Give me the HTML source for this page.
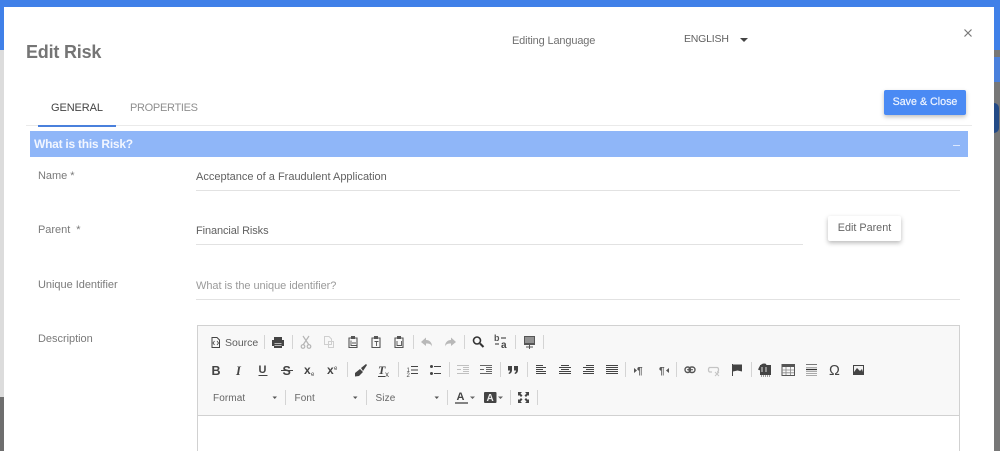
<!DOCTYPE html>
<html><head><meta charset="utf-8">
<style>
html,body{margin:0;padding:0}
body{width:1000px;height:451px;overflow:hidden;position:relative;background:#777;font-family:"Liberation Sans",sans-serif}
.a{position:absolute;white-space:nowrap}
.l{font-size:11px;color:#7a7a7a;letter-spacing:-.03px}
.v{font-size:11px;color:#616161;letter-spacing:0}
.u{position:absolute;height:1px;background:#e2e2e2}
</style></head><body>
<div class="a" style="left:0;top:0;width:1000px;height:50px;background:#4080e8"></div>
<div class="a" style="left:0;top:50px;width:4px;height:347px;background:#dcdcdc"></div>
<div class="a" style="left:0;top:397px;width:4px;height:54px;background:#6e6e6e"></div>
<div class="a" style="left:994px;top:57px;width:6px;height:25px;background:#4a80dc"></div>
<div class="a" style="left:994px;top:103px;width:5px;height:30px;background:#234a86;border-radius:0 14px 14px 0"></div>
<div class="a" style="left:4px;top:7px;width:990px;height:444px;background:#fff"></div>

<div class="a" style="left:26px;top:42px;font-size:18px;font-weight:bold;color:#757575;letter-spacing:-.2px">Edit Risk</div>
<div class="a l" style="left:512px;top:35px;color:#707070;letter-spacing:-.15px">Editing Language</div>
<div class="a" style="left:684px;top:33px;font-size:10.500px;color:#616161;letter-spacing:-.2px">ENGLISH</div>
<div class="a" style="left:740px;top:38px;width:0;height:0;border:4px solid transparent;border-top:4px solid #444;border-bottom:0"></div>
<svg class="a" style="left:963px;top:28px" width="10" height="10"><path d="M1.500 1.500L8.500 8.500M8.500 1.500L1.500 8.500" stroke="#777" stroke-width="1.200"/></svg>

<div class="a" style="left:51px;top:102px;font-size:11px;color:#444;letter-spacing:-.1px">GENERAL</div>
<div class="a" style="left:130px;top:102px;font-size:11px;color:#8f8f8f;letter-spacing:-.3px">PROPERTIES</div>
<div class="a" style="left:26px;top:125px;width:946px;height:1px;background:#eaeaea"></div>
<div class="a" style="left:38px;top:125px;width:78px;height:2px;background:#4a80dc"></div>
<div class="a" style="left:884px;top:90px;width:82px;height:25px;background:#4a8af4;border-radius:2px;box-shadow:0 2px 4px rgba(0,0,0,.25);font-size:10.700px;-webkit-text-stroke:.2px #eef4ff;line-height:25px;text-align:center;color:#eef4ff">Save &amp; Close</div>

<div class="a" style="left:30px;top:131px;width:938px;height:26px;background:#8fb6f8"></div>
<div class="a" style="left:34px;top:137px;font-size:12px;font-weight:bold;color:#f2f6ff;letter-spacing:-.25px">What is this Risk?</div>
<div class="a" style="left:953px;top:145px;width:7px;height:1px;background:#dbe7fd"></div>

<div class="a l" style="left:38px;top:170px">Name *</div>
<div class="a v" style="left:196px;top:171px">Acceptance of a Fraudulent Application</div>
<div class="u" style="left:196px;top:190px;width:764px"></div>

<div class="a l" style="left:38px;top:224px">Parent &nbsp;*</div>
<div class="a v" style="left:196px;top:225px;letter-spacing:-.1px">Financial Risks</div>
<div class="u" style="left:196px;top:244px;width:607px"></div>
<div class="a" style="left:828px;top:216px;width:73px;height:25px;background:#fff;border-radius:2px;box-shadow:0 2px 5px rgba(0,0,0,.28);color:#666;font-size:10.800px;line-height:24px;text-align:center">Edit Parent</div>

<div class="a l" style="left:38px;top:279px">Unique Identifier</div>
<div class="a" style="left:196px;top:280px;font-size:11px;color:#9a9a9a;letter-spacing:-.05px">What is the unique identifier?</div>
<div class="u" style="left:196px;top:299px;width:764px"></div>

<div class="a l" style="left:38px;top:333px">Description</div>

<div class="a" style="left:197px;top:325px;width:761px;height:89px;background:#f8f8f8;border:1px solid #d1d1d1"></div>
<div class="a" style="left:197px;top:416px;width:761px;height:35px;background:#fff;border-left:1px solid #d1d1d1;border-right:1px solid #d1d1d1"></div>

<svg class="a" style="left:0;top:0" width="1000" height="451" font-family="Liberation Sans, sans-serif">
<g stroke="#d4d4d4" stroke-width="1">
<path d="M264.500 335V349M292.500 335V349M413.500 335V349M464.500 335V349M515.500 335V349M543.500 335V349"/>
<path d="M347.500 362V377M398.500 362V377M449.500 362V377M500.500 362V377M527.500 362V377M625.500 362V377M676.500 362V377M751.500 362V377"/>
<path d="M285.500 390V405M366.500 390V405M447.500 390V405M510.500 390V405M537.500 390V405"/>
</g>
<!-- row 1 -->
<g fill="none" stroke="#444" stroke-width="1">
<path d="M212 337.500H217L219.500 340V347.500H212Z"/><path d="M214.500 341L213 343L214.500 345M217 341L218.500 343L217 345" stroke-width=".8"/>
</g>
<text x="225" y="346" font-size="10.500" fill="#5c5c5c">Source</text>
<path d="M274 340V337H282V340H284V346H282V348H274V346H272V340Z" fill="#444"/><path d="M274.500 343.500H281.500M274.500 345.500H281.500" stroke="#ddd" stroke-width=".8"/>
<g fill="none" stroke="#b5b5b5" stroke-width="1.200"><path d="M303 336L309 345M309 336L303 345"/><circle cx="303" cy="346.500" r="1.800"/><circle cx="309" cy="346.500" r="1.800"/></g>
<g fill="none" stroke="#cfcfcf"><path d="M324.500 336.500H329L331.500 339V344.500H324.500Z"/><path d="M328.500 341.500H333.500V347.500H328.500Z"/></g>
<g fill="none" stroke="#555" stroke-width="1.100">
<path d="M349 338H357V347.500H349Z"/><path d="M351 340.500V345.500H357M352 343H356" stroke-width=".9"/>
<path d="M372 338H380V347.500H372Z"/><path d="M374.500 341.500H378.500M376.500 341.500V346" stroke-width=".9"/>
<path d="M395 338H403V347.500H395Z"/><path d="M397 341V345.500H401.500V341" stroke-width=".9"/>
</g>
<path d="M351 336H355V339H351ZM374 336H378V339H374ZM397 336H401V339H397Z" fill="#555"/>
<path d="M421 342L426 337.500V340C430 340 432 343 432 346.500C431 344 429.500 343.500 426 343.500V346Z" fill="#b8b8b8"/>
<path d="M456 342L451 337.500V340C447 340 445 343 445 346.500C446 344 447.500 343.500 451 343.500V346Z" fill="#b8b8b8"/>
<g fill="none" stroke="#333"><circle cx="477" cy="340.500" r="3.500" stroke-width="1.600"/><path d="M480 343.500L483.500 347" stroke-width="2"/></g>
<text x="494" y="341" font-size="9" font-weight="bold" fill="#555">b</text><text x="501" y="348" font-size="10" font-weight="bold" fill="#444">a</text>
<path d="M501 338H506M495 344H499" stroke="#555" stroke-width="1.200"/>
<path d="M524 336H535V345H524Z" fill="#555"/><path d="M525 338H534M525 340H534M525 342H534" stroke="#f8f8f8" stroke-width=".7"/><path d="M526 347H533M529.500 345V349" stroke="#555"/>
<!-- row 2 -->
<g font-family="Liberation Sans, sans-serif" fill="#444">
<text x="211.500" y="375" font-size="12.500" font-weight="bold">B</text>
<text x="236" y="375" font-size="12.500" font-weight="bold" font-style="italic" font-family="Liberation Serif, serif">I</text>
<text x="258.500" y="373" font-size="11" font-weight="bold">U</text>
<text x="282.500" y="375" font-size="12.500" font-weight="bold">S</text>
<text x="304" y="374" font-size="12" font-weight="bold">x</text><text x="311" y="376" font-size="6">e</text>
<text x="327" y="374" font-size="12" font-weight="bold">x</text><text x="334" y="370" font-size="6">e</text>
<text x="378" y="374" font-size="12" font-weight="bold" font-style="italic" font-family="Liberation Serif, serif">T</text><text x="385" y="377" font-size="8">x</text>
</g>
<path d="M258.500 375.500H267.500" stroke="#444"/><path d="M281 370.500H293" stroke="#444"/><path d="M378 376.500H385" stroke="#444"/>
<path d="M355 373L360 369L363 372L359 376L355 376.500ZM361 368L366 364L367 365L363 371Z" fill="#444"/>
<g stroke="#444" fill="none"><path d="M411 366.500H418M411 370H418M411 373.500H418"/><path d="M434 366.500H441M434 373.500H441"/></g>
<circle cx="431.500" cy="366.500" r="1.500" fill="#444"/><circle cx="431.500" cy="373.500" r="1.500" fill="#444"/>
<text x="406.500" y="372" font-size="6" fill="#444">1</text><text x="406.500" y="377" font-size="6" fill="#444">2</text>
<g stroke="#c0c0c0" fill="none"><path d="M457 365.500H469M463 367.500H469M463 369.500H469M463 371.500H469M457 373.500H469M457 369.500H461"/></g>
<g stroke="#666" fill="none"><path d="M480 365.500H492M486 367.500H492M486 369.500H492M486 371.500H492M480 373.500H492M480 369.500H484"/></g>
<path d="M508 366H512V370C512 372 511 373.500 509 374L508.500 373C509.500 372.500 510 371.500 510 370.500H508ZM514 366H518V370C518 372 517 373.500 515 374L514.500 373C515.500 372.500 516 371.500 516 370.500H514Z" fill="#444"/>
<g stroke="#444" fill="none" stroke-width="1.100">
<path d="M536 365.500H543M536 367.500H546M536 369.500H543M536 371.500H546M536 373.500H546"/>
<path d="M561 365.500H569M559 367.500H571M561 369.500H569M559 371.500H571M559 373.500H571"/>
<path d="M586 365.500H594M583 367.500H594M586 369.500H594M583 371.500H594M583 373.500H594"/>
<path d="M606 365.500H618M606 367.500H618M606 369.500H618M606 371.500H618M606 373.500H618"/>
</g>
<text x="637" y="374" font-size="10" font-weight="bold" fill="#555">¶</text><path d="M634 368L637 370.500L634 373Z" fill="#555"/>
<text x="659" y="374" font-size="10" font-weight="bold" fill="#555">¶</text><path d="M669 368L666 370.500L669 373Z" fill="#555"/>
<g fill="none"><rect x="685" y="367" width="5.500" height="5.500" rx="2.700" stroke="#555" stroke-width="1.400"/><rect x="689" y="367" width="6" height="5.500" rx="2.700" stroke="#555" stroke-width="1.400"/><path d="M687 369.700H693" stroke="#555"/>
<path d="M709 367.500H717C719 367.500 719 372 717 372M712 372H710C708 372 708 367.500 710 367.500" stroke="#c4c4c4" stroke-width="1.300"/><path d="M715 372L719 376M719 372L715 376" stroke="#c4c4c4"/></g>
<path d="M732.500 364V376" stroke="#444"/><path d="M733 364.500H742V371.500L737.500 370.500L733 371.500Z" fill="#444"/>
<rect x="760" y="365" width="11" height="10" fill="#444"/><path d="M759 370C761 364 764 364 766 365" fill="none" stroke="#444" stroke-width="2"/><path d="M762 372V367M766 372V367" stroke="#ddd"/><path d="M761 376H771" stroke="#444" stroke-dasharray="1 1"/>
<g fill="none" stroke="#555"><path d="M782 364.500H794.500V375.500H782Z"/><path d="M786 367V375M790.500 367V375M782 370H794M782 372.800H794" stroke="#888" stroke-width=".8"/></g><path d="M782 364H795V367H782Z" fill="#555"/>
<g stroke="#777" fill="none"><path d="M806 364.500H817"/><path d="M806 369.500H817" stroke="#333" stroke-width="1.300"/><path d="M806 367.500H817M806 371.500H817M806 373.500H817M806 375.500H817" stroke="#aaa"/></g>
<text x="829" y="375" font-size="14.500" fill="#444">Ω</text>
<rect x="853" y="365" width="11" height="10" fill="#444"/><rect x="854" y="366" width="9" height="6" fill="#f2f2f2"/><path d="M854 372L857 368L860 371L862 369L863 372Z" fill="#444"/>
<!-- row 3 -->
<text x="213" y="401" font-size="10" fill="#666" letter-spacing=".1">Format</text>
<text x="294.500" y="401" font-size="10" fill="#666" letter-spacing=".1">Font</text>
<text x="375.500" y="401" font-size="10" fill="#666" letter-spacing=".1">Size</text>
<path d="M272.500 396.500H277L274.750 399ZM353 396.500H357.500L355.250 399ZM434.500 396.500H439L436.750 399Z" fill="#555"/>
<text x="456.500" y="400" font-size="11" font-weight="bold" fill="#444">A</text>
<path d="M455 403H468" stroke="#444" stroke-width="1.300"/>
<path d="M470 396.500H475L472.500 399ZM498 396.500H503L500.500 399Z" fill="#666"/>
<rect x="484" y="392" width="12.500" height="11" rx="1" fill="#444"/>
<text x="486.500" y="401" font-size="10" font-weight="bold" fill="#eee">A</text>
<g fill="#444"><path d="M518 392H522L520.500 393.500L522.500 395.500L521 397L519 395L518 396ZM529 392H525L526.500 393.500L524.500 395.500L526 397L528 395L529 396ZM518 403H522L520.500 401.500L522.500 399.500L521 398L519 400L518 399ZM529 403H525L526.500 401.500L524.500 399.500L526 398L528 400L529 399Z"/></g>
</svg>
</body></html>
